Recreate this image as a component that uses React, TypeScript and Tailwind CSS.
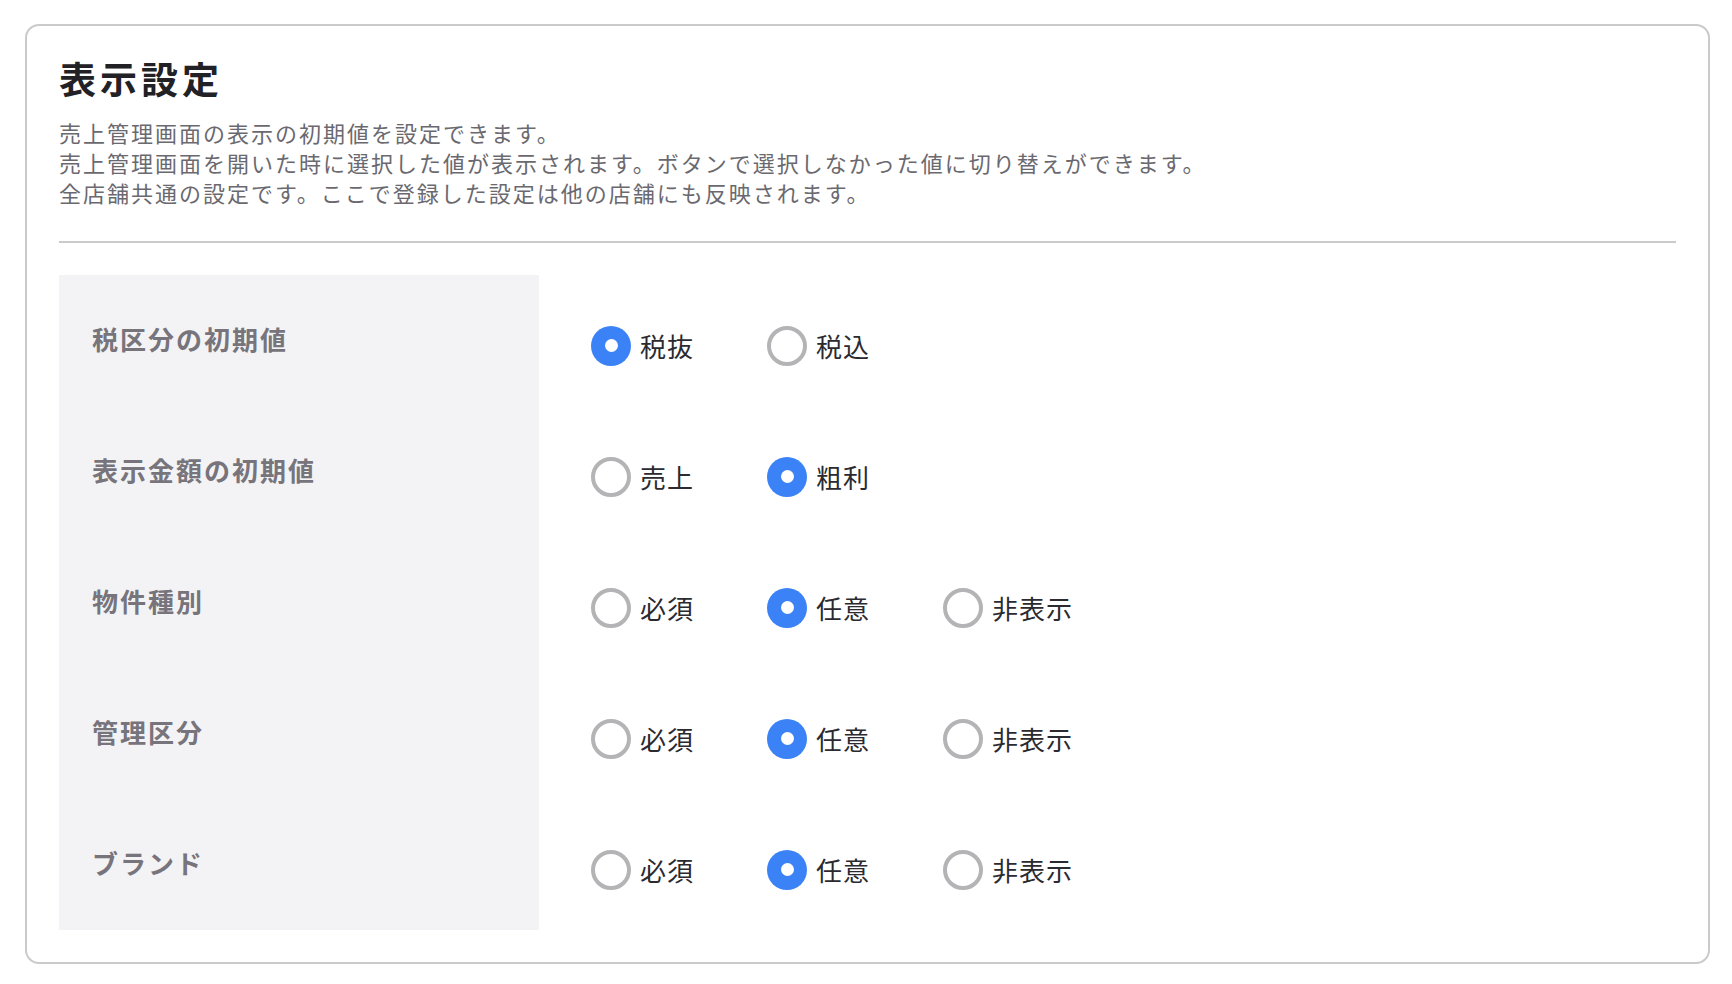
import React, { useState } from "react";

interface SettingRow {
  key: string;
  label: string;
  options: string[];
  initial: number;
}

const rows: SettingRow[] = [
  { key: "tax", label: "税区分の初期値", options: ["税抜", "税込"], initial: 0 },
  { key: "amount", label: "表示金額の初期値", options: ["売上", "粗利"], initial: 1 },
  { key: "property", label: "物件種別", options: ["必須", "任意", "非表示"], initial: 1 },
  { key: "manage", label: "管理区分", options: ["必須", "任意", "非表示"], initial: 1 },
  { key: "brand", label: "ブランド", options: ["必須", "任意", "非表示"], initial: 1 },
];

const Radio: React.FC<{ checked: boolean }> = ({ checked }) =>
  checked ? (
    <span className="flex h-10 w-10 shrink-0 items-center justify-center rounded-full bg-[#3b82f6]">
      <span className="h-[13px] w-[13px] rounded-full bg-white" />
    </span>
  ) : (
    <span className="h-10 w-10 shrink-0 rounded-full border-[4px] border-[#b4b4b6] bg-white" />
  );

export default function App() {
  const [values, setValues] = useState<Record<string, number>>(
    Object.fromEntries(rows.map((r) => [r.key, r.initial]))
  );

  return (
    <div
      className="min-h-screen bg-white pt-[24px] pl-[25px]"
      style={{ fontFamily: '"Noto Sans CJK JP", "Noto Sans", sans-serif' }}
    >
      <div className="w-[1685px] rounded-[14px] border-2 border-[#cacaca] px-8 pt-[28px] pb-8">
        {/* Header */}
        <h1 className="text-[37px] leading-[48px] font-bold tracking-[4px] text-[#222226]">
          表示設定
        </h1>
        <div className="mt-[15px] text-[22px] leading-[30px] tracking-[2px] text-[#6a696f]">
          <p>売上管理画面の表示の初期値を設定できます。</p>
          <p>売上管理画面を開いた時に選択した値が表示されます。ボタンで選択しなかった値に切り替えができます。</p>
          <p>全店舗共通の設定です。ここで登録した設定は他の店舗にも反映されます。</p>
        </div>

        <div className="mt-[34px] h-[2px] bg-[#cbcbcb]" />

        {/* Settings */}
        <div className="mt-[32px] flex">
          <div className="w-[480px] bg-[#f3f3f5]">
            {rows.map((row) => (
              <div
                key={row.key}
                className="flex h-[131px] items-center pb-[4px] pl-[33px] text-[26px] font-bold tracking-[2px] text-[#77747b]"
              >
                {row.label}
              </div>
            ))}
          </div>
          <div className="flex-1 pl-[52px]">
            {rows.map((row) => (
              <div key={row.key} className="flex h-[131px] items-center pt-[10px]">
                {row.options.map((opt, i) => (
                  <button
                    key={opt}
                    onClick={() => setValues({ ...values, [row.key]: i })}
                    className="flex w-[176px] items-center gap-[9px] text-left"
                  >
                    <Radio checked={values[row.key] === i} />
                    <span className="text-[26px] tracking-[1px] text-[#2a2a30]">{opt}</span>
                  </button>
                ))}
              </div>
            ))}
          </div>
        </div>
      </div>
    </div>
  );
}
